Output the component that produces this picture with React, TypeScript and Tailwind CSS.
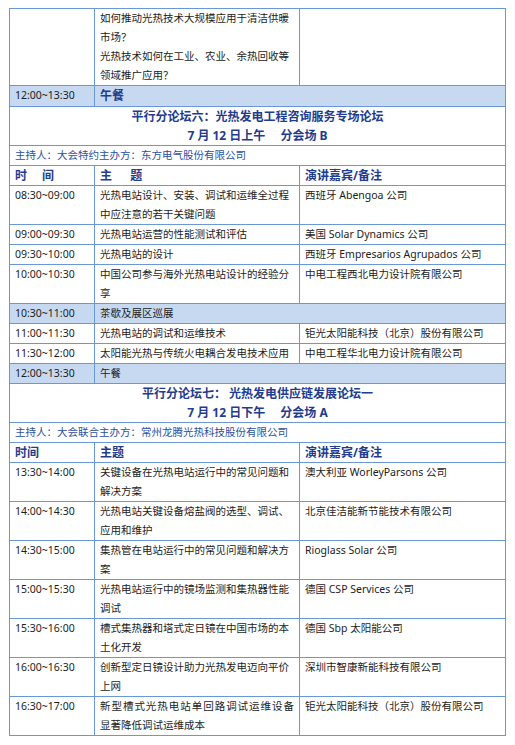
import React from 'react';

// ── Data ─────────────────────────────────────────────────────────────────────
type Row =
  | { kind: 'talk'; time: string; topic: React.ReactNode; speaker: string }
  | { kind: 'break'; time: string; label: string; strong?: boolean };

const FORUM_6: Row[] = [
  { kind: 'talk', time: '08:30~09:00', topic: '光热电站设计、安装、调试和运维全过程中应注意的若干关键问题', speaker: '西班牙 Abengoa 公司' },
  { kind: 'talk', time: '09:00~09:30', topic: '光热电站运营的性能测试和评估', speaker: '美国 Solar Dynamics 公司' },
  { kind: 'talk', time: '09:30~10:00', topic: '光热电站的设计', speaker: '西班牙 Empresarios Agrupados 公司' },
  { kind: 'talk', time: '10:00~10:30', topic: '中国公司参与海外光热电站设计的经验分享', speaker: '中电工程西北电力设计院有限公司' },
  { kind: 'break', time: '10:30~11:00', label: '茶歇及展区巡展' },
  { kind: 'talk', time: '11:00~11:30', topic: '光热电站的调试和运维技术', speaker: '钜光太阳能科技（北京）股份有限公司' },
  { kind: 'talk', time: '11:30~12:00', topic: '太阳能光热与传统火电耦合发电技术应用', speaker: '中电工程华北电力设计院有限公司' },
  { kind: 'break', time: '12:00~13:30', label: '午餐' },
];

const FORUM_7: Row[] = [
  { kind: 'talk', time: '13:30~14:00', topic: '关键设备在光热电站运行中的常见问题和解决方案', speaker: '澳大利亚 WorleyParsons 公司' },
  { kind: 'talk', time: '14:00~14:30', topic: '光热电站关键设备熔盐阀的选型、调试、应用和维护', speaker: '北京佳洁能新节能技术有限公司' },
  { kind: 'talk', time: '14:30~15:00', topic: '集热管在电站运行中的常见问题和解决方案', speaker: 'Rioglass Solar 公司' },
  { kind: 'talk', time: '15:00~15:30', topic: '光热电站运行中的镜场监测和集热器性能调试', speaker: '德国 CSP Services 公司' },
  { kind: 'talk', time: '15:30~16:00', topic: '槽式集热器和塔式定日镜在中国市场的本土化开发', speaker: '德国 Sbp 太阳能公司' },
  { kind: 'talk', time: '16:00~16:30', topic: '创新型定日镜设计助力光热发电迈向平价上网', speaker: '深圳市智康新能科技有限公司' },
  {
    kind: 'talk',
    time: '16:30~17:00',
    topic: (
      <>
        <span className="block [text-align-last:justify]">新型槽式光热电站单回路调试运维设备</span>
        <span className="block">显著降低调试运维成本</span>
      </>
    ),
    speaker: '钜光太阳能科技（北京）股份有限公司',
  },
];

// ── Cells ────────────────────────────────────────────────────────────────────
const cell = 'border border-[#6a97d6] px-[5px] py-0 align-top leading-[19px]';
const navy = 'text-[#1f3c8e]';

function ScheduleRows({ rows }: { rows: Row[] }) {
  return (
    <>
      {rows.map((r, i) =>
        r.kind === 'break' ? (
          <tr key={i} className="bg-[#c6d9f1]">
            <td className={cell}>{r.time}</td>
            <td className={cell} colSpan={2}>
              {r.strong ? <span className={`font-bold text-[12px] ${navy}`}>{r.label}</span> : r.label}
            </td>
          </tr>
        ) : (
          <tr key={i}>
            <td className={cell}>{r.time}</td>
            <td className={cell}>{r.topic}</td>
            <td className={cell}>{r.speaker}</td>
          </tr>
        ),
      )}
    </>
  );
}

function ForumHeader({ title, date, host, spaced }: { title: string; date: string; host: string; spaced?: boolean }) {
  return (
    <>
      <tr>
        <td className={`${cell} text-center font-bold text-[12px] ${navy}`} colSpan={3}>
          <div className="whitespace-pre">{title}</div>
          <div className="whitespace-pre">{date}</div>
        </td>
      </tr>
      <tr>
        <td className={`${cell} text-[#2b4f9f]`} colSpan={3}>{host}</td>
      </tr>
      <tr className={`font-bold text-[12px] ${navy}`}>
        <td className={`${cell} whitespace-pre`}>{spaced ? '时\u3000 间' : '时间'}</td>
        <td className={`${cell} whitespace-pre`}>{spaced ? '主\u3000  题' : '主题'}</td>
        <td className={cell}>演讲嘉宾/备注</td>
      </tr>
    </>
  );
}

// ── Page ─────────────────────────────────────────────────────────────────────
export default function App() {
  return (
    <div className="min-h-screen bg-white pt-[8px] font-['Noto_Sans','Noto_Sans_CJK_SC',sans-serif] text-[10.5px] text-[#1c1c1c]">
      <table className="ml-[9px] w-[497px] table-fixed border-collapse">
        <colgroup>
          <col className="w-[85px]" />
          <col className="w-[205px]" />
          <col />
        </colgroup>
        <tbody>
          <tr>
            <td className={cell}></td>
            <td className={cell}>
              <div>如何推动光热技术大规模应用于清洁供暖市场？</div>
              <div>光热技术如何在工业、农业、余热回收等领域推广应用？</div>
            </td>
            <td className={cell}></td>
          </tr>
          <ScheduleRows rows={[{ kind: 'break', time: '12:00~13:30', label: '午餐', strong: true }]} />

          <ForumHeader
            title="平行分论坛六：光热发电工程咨询服务专场论坛"
            date={'7 月 12 日上午\u3000 分会场 B'}
            host="主持人：大会特约主办方：东方电气股份有限公司"
            spaced
          />
          <ScheduleRows rows={FORUM_6} />

          <ForumHeader
            title="平行分论坛七： 光热发电供应链发展论坛一"
            date={'7 月 12 日下午\u3000 分会场 A'}
            host="主持人：大会联合主办方：常州龙腾光热科技股份有限公司"
          />
          <ScheduleRows rows={FORUM_7} />
        </tbody>
      </table>
    </div>
  );
}
